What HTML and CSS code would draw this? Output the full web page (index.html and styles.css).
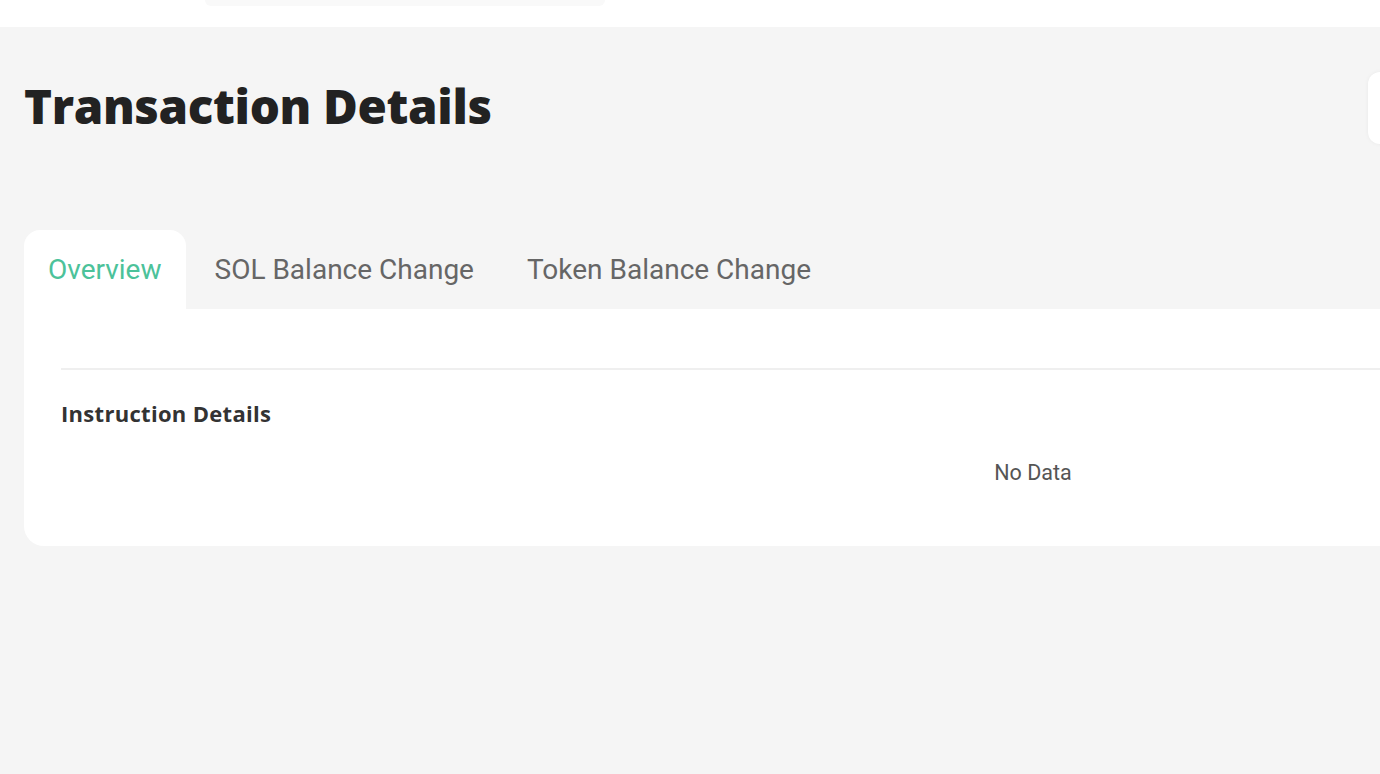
FILE: index.html
```html
<!DOCTYPE html>
<html lang="en">
<head>
<meta charset="utf-8">
<title>Transaction Details</title>
<link rel="stylesheet" href="styles.css">
</head>
<body>
<header class="topbar">
  <div class="search"></div>
</header>
<main class="page">
  <div class="page-head">
    <h1 class="title">Transaction Details</h1>
    <div class="head-btn"></div>
  </div>
  <nav class="tabs">
    <div class="tab active">Overview</div>
    <div class="tab">SOL Balance Change</div>
    <div class="tab">Token Balance Change</div>
  </nav>
  <section class="card">
    <div class="divider"></div>
    <h2 class="section-title">Instruction Details</h2>
    <div class="empty">No Data</div>
  </section>
</main>
</body>
</html>
```
FILE: styles.css
```css
html, body {
  margin: 0;
  padding: 0;
}
body {
  background: #f5f5f5;
  overflow: hidden;
  font-family: Roboto, "Liberation Sans", sans-serif;
  width: 1380px;
  height: 774px;
}
.topbar {
  height: 27px;
  background: #ffffff;
  display: flex;
  align-items: flex-start;
  padding-left: 205px;
}
.search {
  width: 400px;
  height: 6px;
  background: #f9f9f9;
  border-radius: 0 0 10px 10px;
}
.page {
  width: 1981px;
  padding-left: 24px;
}
.page-head {
  width: 1404px;
  display: flex;
  justify-content: space-between;
  align-items: flex-start;
}
.title {
  margin: 0;
  padding-top: 50px;
  font-family: "Open Sans", sans-serif;
  font-weight: 800;
  font-size: 47.5px;
  line-height: 58px;
  color: #222222;
  letter-spacing: -0.35px;
}
.head-btn {
  width: 60px;
  height: 72px;
  margin-top: 45px;
  background: #ffffff;
  border-radius: 12px;
  box-shadow: 0 0 4px rgba(0,0,0,0.05);
}
.tabs {
  display: flex;
  gap: 5px;
  margin-top: 86px;
  height: 79px;
}
.tab {
  padding: 0 24px;
  display: flex;
  align-items: center;
  font-size: 28px;
  color: #666666;
}
.tab.active {
  background: #ffffff;
  color: #4cc29a;
  border-radius: 16px 16px 0 0;
}
.card {
  background: #ffffff;
  border-radius: 0 20px 20px 20px;
  padding: 59px 0 0 37px;
  height: 178px;
}
.divider {
  height: 2px;
  background: #efefef;
}
.section-title {
  margin: 0;
  padding-top: 30px;
  font-family: "Open Sans", sans-serif;
  font-weight: 700;
  font-size: 22px;
  line-height: 26px;
  color: #333333;
  letter-spacing: 0.3px;
}
.empty {
  text-align: center;
  padding-top: 34px;
  font-size: 21.5px;
  color: #555555;
}
```
